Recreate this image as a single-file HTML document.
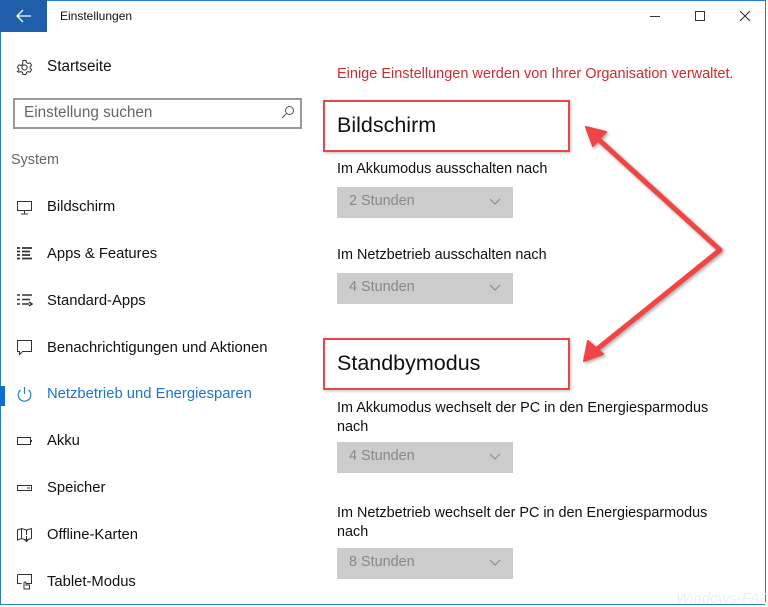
<!DOCTYPE html>
<html><head><meta charset="utf-8"><style>
*{margin:0;padding:0;box-sizing:border-box}
body{width:768px;height:607px;overflow:hidden;background:#fff;font-family:"Liberation Sans",sans-serif;color:#111;position:relative}
.frame{position:absolute;left:0;top:0;width:766px;height:605px;border:1px solid #2a7bd6}
.a{position:absolute;white-space:nowrap}
.nav{font-size:14.8px;left:47px}
.ic{position:absolute;left:16px}
.lbl{font-size:14.4px;left:337px}
.dd{position:absolute;left:337px;width:176px;height:31px;background:#ccc;color:#888;font-size:14.4px;padding:6px 12px}
.dd svg{position:absolute;right:12px;top:11px}
.box{position:absolute;left:323px;width:247px;height:52px;border:2px solid #e8474a;box-shadow:1px 1px 3px rgba(0,0,0,.25)}
.box span{position:absolute;left:12px;top:11px;font-size:21.5px}
</style></head><body>
<div class="frame"></div>
<div style="position:absolute;left:0;top:0;width:47px;height:32px;background:#1f5ea8"></div>
<svg class="a" style="left:16px;top:9px" width="16" height="14"><path d="M1 7H15M7 1L1 7L7 13" stroke="#fff" stroke-width="1.3" fill="none"/></svg>
<div class="a" style="left:60px;top:9px;font-size:12px">Einstellungen</div>
<svg class="a" style="left:648px;top:10px" width="110" height="12"><path d="M2 6.5H12" stroke="#333"/><rect x="47.5" y="1.5" width="9" height="9" fill="none" stroke="#333"/><path d="M92 1L102 11M102 1L92 11" stroke="#333" stroke-width="1.1"/></svg>

<svg class="ic" style="top:59px" width="17" height="17" viewBox="0 0 17 17"><circle cx="8.5" cy="8.5" r="2.6" fill="none" stroke="#333"/><path d="M7 1.5h3l.5 2 1.6.9 2-.6 1.5 2.6-1.5 1.4v1.4l1.5 1.4-1.5 2.6-2-.6-1.6.9-.5 2H7l-.5-2-1.6-.9-2 .6L1.4 12.6l1.5-1.4V9.8L1.4 8.4 2.9 5.8l2 .6 1.6-.9z" fill="none" stroke="#333"/></svg>
<div class="a nav" style="top:58px;font-size:15.3px">Startseite</div>
<div style="position:absolute;left:13px;top:98px;width:289px;height:31px;border:2px solid #999"></div>
<div class="a" style="left:24px;top:104px;font-size:15.3px;color:#666">Einstellung suchen</div>
<svg class="a" style="left:281px;top:105px" width="14" height="14"><circle cx="8.5" cy="5.5" r="4" fill="none" stroke="#555"/><path d="M5.5 8.5L1 13" stroke="#555"/></svg>
<div class="a" style="left:11px;top:152px;font-size:14.4px;color:#666">System</div>

<svg class="ic" style="top:200px" width="17" height="15"><rect x="1.5" y="1.5" width="14" height="9" fill="none" stroke="#333"/><path d="M8.5 11v3M5 14h7" stroke="#333"/></svg>
<div class="a nav" style="top:199px">Bildschirm</div>
<svg class="ic" style="top:246px" width="17" height="15"><path d="M1 2h3M1 5.5h3M1 9h3M1 12.5h3M6 2h10M6 5.5h8M6 9h8M6 12.5h10" stroke="#333" stroke-width="1.7"/></svg>
<div class="a nav" style="top:246px">Apps &amp; Features</div>
<svg class="ic" style="top:293px" width="17" height="15"><path d="M1 2h3M1 6.5h3M1 11h3M6 2h10M6 6.5h8M6 11h7M13 9l3 2-3 2" stroke="#333" stroke-width="1.5" fill="none"/></svg>
<div class="a nav" style="top:293px">Standard-Apps</div>
<svg class="ic" style="top:339px" width="17" height="17"><path d="M1.5 1.5h14v11h-9l-3 3v-3h-2z" fill="none" stroke="#333"/></svg>
<div class="a nav" style="top:340px">Benachrichtigungen und Aktionen</div>
<div style="position:absolute;left:0;top:386px;width:5px;height:20px;background:#0a6fd0"></div>
<svg class="ic" style="top:386px" width="17" height="17"><path d="M4.5 4A6.3 6.3 0 1 0 12.5 4M8.5 1v7" fill="none" stroke="#2a7bd6" stroke-width="1.2"/></svg>
<div class="a nav" style="top:386px;color:#1d74cf">Netzbetrieb und Energiesparen</div>
<svg class="ic" style="top:436px" width="18" height="10"><rect x="1.5" y="1.5" width="13" height="7" fill="none" stroke="#333"/><path d="M15 4v2" stroke="#333" stroke-width="2"/></svg>
<div class="a nav" style="top:433px">Akku</div>
<svg class="ic" style="top:484px" width="18" height="8"><rect x="1.5" y="1.5" width="14" height="5" fill="none" stroke="#333"/><path d="M11 4h3" stroke="#333"/></svg>
<div class="a nav" style="top:480px">Speicher</div>
<svg class="ic" style="top:527px" width="17" height="17"><path d="M1.5 3l4-1.5 5 1.5 5-1.5v10l-5 1.5-5-1.5-4 1.5zM5.5 1.5v10M10.5 3v5M10.5 9v5M8 12l2.5 2.5 2.5-2.5" fill="none" stroke="#333"/></svg>
<div class="a nav" style="top:527px">Offline-Karten</div>
<svg class="ic" style="top:573px" width="17" height="18"><path d="M1.5 1.5h14v9h-6M1.5 1.5v9h4" fill="none" stroke="#333"/><path d="M8 16v-6a1 1 0 0 1 2 0V12h3.5v4z" fill="none" stroke="#333"/></svg>
<div class="a nav" style="top:574px">Tablet-Modus</div>

<div class="a" style="left:337px;top:66px;font-size:14.5px;color:#d42a2e">Einige Einstellungen werden von Ihrer Organisation verwaltet.</div>

<div class="box" style="top:100px"><span>Bildschirm</span></div>
<div class="a lbl" style="top:161px">Im Akkumodus ausschalten nach</div>
<div class="dd" style="top:187px">2 Stunden<svg width="12" height="8"><path d="M1 1l5 5 5-5" stroke="#888" fill="none"/></svg></div>
<div class="a lbl" style="top:247px">Im Netzbetrieb ausschalten nach</div>
<div class="dd" style="top:273px">4 Stunden<svg width="12" height="8"><path d="M1 1l5 5 5-5" stroke="#888" fill="none"/></svg></div>

<div class="box" style="top:338px"><span>Standbymodus</span></div>
<div class="a lbl" style="top:399px;line-height:19px">Im Akkumodus wechselt der PC in den Energiesparmodus<br>nach</div>
<div class="dd" style="top:442px">4 Stunden<svg width="12" height="8"><path d="M1 1l5 5 5-5" stroke="#888" fill="none"/></svg></div>
<div class="a lbl" style="top:504px;line-height:19px">Im Netzbetrieb wechselt der PC in den Energiesparmodus<br>nach</div>
<div class="dd" style="top:548px">8 Stunden<svg width="12" height="8"><path d="M1 1l5 5 5-5" stroke="#888" fill="none"/></svg></div>

<svg class="a" style="left:0;top:0" width="768" height="607">
<defs><filter id="s"><feDropShadow dx="1.5" dy="1.5" stdDeviation="1.5" flood-opacity=".35"/></filter></defs>
<g filter="url(#s)" fill="#ef4444" stroke="#ef4444">
<path d="M597 138L720 250L596 350" fill="none" stroke-width="5" stroke-linejoin="round"/>
<path d="M586 127L606 132L593 146z" stroke-width="2" stroke-linejoin="round"/>
<path d="M584 361L588 341L603 354z" stroke-width="2" stroke-linejoin="round"/>
</g></svg>
<div class="a" style="left:676px;top:590px;font-size:15px;color:#eee;font-style:italic">Windows-FAQ</div>
</body></html>
